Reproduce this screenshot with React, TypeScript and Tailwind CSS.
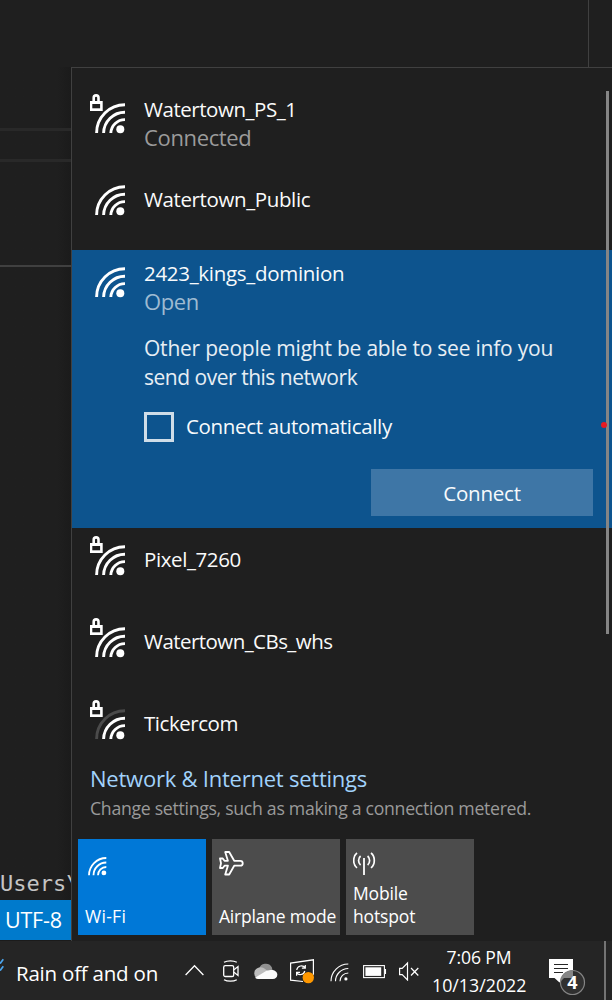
import type { ReactNode } from "react";

function WifiArcs({ weak = false, locked = false }: { weak?: boolean; locked?: boolean }) {
  return (
    <svg width="36" height="40" viewBox="0 0 36 40" fill="none" className="shrink-0">
      <path d="M6.6 39A28.3 28.3 0 0 1 35 10.7" stroke={weak ? "#4b4b4b" : "#fff"} strokeWidth="2.9" />
      <path d="M13.6 39A21.3 21.3 0 0 1 35 18.2" stroke="#fff" strokeWidth="2.9" />
      <path d="M20.8 39A14.1 14.1 0 0 1 35 25.6" stroke="#fff" strokeWidth="2.9" />
      <circle cx="30.3" cy="35.3" r="4" fill="#fff" />
      {locked && (
        <>
          <rect x="0" y="7" width="12.7" height="10" fill="#fff" />
          <path d="M3.7 8V3.8a2.4 2.4 0 0 1 4.8 0V8" stroke="#fff" strokeWidth="2.6" />
          <rect x="2.3" y="10" width="7.8" height="4.3" fill="#1f1f1f" />
        </>
      )}
    </svg>
  );
}

function SmallWifi({ width }: { width: number }) {
  return (
    <svg width="19" height="19" viewBox="0 0 19 19" fill="none" stroke="#fff" strokeWidth={width} className="shrink-0">
      <path d="M1 18.3A17.3 17.3 0 0 1 18.3 1" />
      <path d="M5.5 18.3A12.8 12.8 0 0 1 18.3 5.5" />
      <path d="M10 18.3A8.3 8.3 0 0 1 18.3 10" />
      <circle cx="15.9" cy="15.9" r={width > 1.5 ? 2.4 : 1.6} fill="#fff" stroke="none" />
    </svg>
  );
}

function NetworkRow({ name, locked, weak, status, tracking = "" }: {
  name: string; locked?: boolean; weak?: boolean; status?: string; tracking?: string;
}) {
  return (
    <div className="flex h-[82px] shrink-0 pl-[18px] pt-2">
      <WifiArcs locked={locked} weak={weak} />
      <div className={`ml-[18px] text-[20.5px] leading-[29px] text-[#fafafa] ${status ? "pt-px" : "pt-[9px]"}`}>
        <div className={tracking}>{name}</div>
        {status && <div className="-mt-px text-[22px] tracking-[-0.35px] text-[#9b9b9b]">{status}</div>}
      </div>
    </div>
  );
}

function Tile({ label, icon, active, tracking = "" }: {
  label: ReactNode; icon: ReactNode; active?: boolean; tracking?: string;
}) {
  return (
    <div className={`flex h-24 w-32 flex-col justify-between pb-[7px] pl-[7px] pt-3 text-[17.5px] leading-[23px] text-white ${active ? "bg-[#0078d7]" : "bg-[#4c4c4c]"}`}>
      <div className="h-6">{icon}</div>
      <div className={tracking}>{label}</div>
    </div>
  );
}

function Editor() {
  return (
    <div className="flex w-[71px] shrink-0 flex-col overflow-hidden bg-linear-to-r from-[#1f1f1f] from-80% to-[#1b1b1b]">
      <div className="mt-[61px] h-[3px] bg-[#292929]" />
      <div className="mt-7 h-[3px] bg-[#292929]" />
      <div className="mt-[103px] h-[2px] bg-[#404040]" />
      <div className="mt-auto h-[33px] font-['DejaVu_Sans_Mono',monospace] text-[22px] leading-[33px] text-[#c4c4c4]">Users\</div>
      <div className="h-10 shrink-0 bg-[#007acc] pl-[5px] text-[21.5px] leading-10 tracking-[-0.2px] text-white">UTF-8</div>
      <div className="h-px shrink-0 bg-[#1b1b1b]" />
    </div>
  );
}

function SelectedNetwork() {
  return (
    <div className="flex h-[278px] shrink-0 bg-[#0d548e] pl-[18px] pt-2 text-[20.5px] leading-[29px] text-[#f7fafc]">
      <WifiArcs />
      <div className="ml-[18px] flex flex-1 flex-col pt-px">
        <div className="tracking-[-0.3px]">2423_kings_dominion</div>
        <div className="-mt-px text-[22px] tracking-[-0.4px] text-[#9ebbd2]">Open</div>
        <div className="mt-[18px] text-[21px] tracking-[-0.22px] text-[#e7eef4]">Other people might be able to see info you</div>
        <div className="text-[21px] tracking-[-0.48px] text-[#e7eef4]">send over this network</div>
        <div className="mt-5 flex h-[30px] items-center">
          <div className="size-[30px] border-3 border-[#cfdde8]" />
          <div className="-mt-[2px] ml-3 tracking-[-0.32px]">Connect automatically</div>
        </div>
        <div className="mr-[19px] mt-[27px] h-[47px] w-[222px] self-end bg-[#3e76a6] text-center leading-[49px] tracking-[-0.2px]">Connect</div>
      </div>
    </div>
  );
}

function Flyout() {
  return (
    <div className="relative flex flex-1 flex-col overflow-hidden border-l border-t border-[#404040] bg-[#1f1f1f]">
      <div className="flex h-[682px] shrink-0 flex-col overflow-hidden pt-[18px]">
        <NetworkRow name="Watertown_PS_1" locked status="Connected" tracking="tracking-[-0.45px]" />
        <NetworkRow name="Watertown_Public" tracking="tracking-[-0.38px]" />
        <SelectedNetwork />
        <NetworkRow name="Pixel_7260" locked tracking="tracking-[-0.4px]" />
        <NetworkRow name="Watertown_CBs_whs" locked tracking="tracking-[-0.55px]" />
        <NetworkRow name="Tickercom" locked weak tracking="tracking-[-0.45px]" />
      </div>
      <div className="pl-[18px] pt-[13px]">
        <div className="text-[22px] leading-[30px] tracking-[-0.23px] text-[#a1d2fb]">Network &amp; Internet settings</div>
        <div className="pt-px text-[17.7px] leading-[28px] tracking-[-0.3px] text-[#9a9a9a]">Change settings, such as making a connection metered.</div>
      </div>
      <div className="mt-[17px] flex gap-[6px] pl-[6px]">
        <Tile label="Wi-Fi" active tracking="tracking-[0.3px]" icon={<div className="pl-[3px] pt-[6px]"><SmallWifi width={1.8} /></div>} />
        <Tile
          label={<span className="whitespace-nowrap">Airplane mode</span>}
          tracking="tracking-[-0.2px]"
          icon={
            <svg width="25" height="25" viewBox="0 0 25 25" fill="none" stroke="#fff" strokeWidth="1.8" strokeLinejoin="round">
              <path d="M6.2 1h4l5 8.8h6.1a2.4 2.4 0 0 1 0 4.9h-6.1l-5 8.8h-4l2.7-8.8H5.5L3.8 17H1l1-4.8L1 7.5h2.8l1.7 2.3h3.4z" />
            </svg>
          }
        />
        <Tile
          label={<>Mobile<br />hotspot</>}
          tracking="tracking-[-0.15px]"
          icon={
            <svg width="24" height="25" viewBox="0 0 24 25" fill="none" stroke="#fff" strokeWidth="1.7">
              <path d="M11 7v17" strokeWidth="1.8" />
              <path d="M4 2c-4.4 3.5-4.4 11.3 0 14.8M18 2c4.4 3.5 4.4 11.3 0 14.8M7.6 5c-2.7 2.2-2.7 6.8 0 9M14.6 5c2.7 2.2 2.7 6.8 0 9" />
            </svg>
          }
        />
      </div>
      <div className="absolute right-[3px] top-[23px] h-[543px] w-[3px] bg-[#858585]" />
      <div className="absolute right-[5px] top-[354px] size-[6px] rounded-full bg-[#e81a22]" />
    </div>
  );
}

function Taskbar() {
  return (
    <div className="flex h-[59px] shrink-0 bg-[#252525] text-white">
      <svg width="4" height="14" viewBox="0 0 4 14" fill="none" stroke="#4ca6ef" strokeWidth="1.7" className="mt-4 shrink-0">
        <path d="M-2 5.5 0.5 6 3.3 2.3M-2 12.5 .5 13 3.3 9.3" />
      </svg>
      <div className="ml-3 w-[168px] pt-[17px] text-[20.5px] leading-[30px] tracking-[-0.22px]">Rain off and on</div>
      <svg width="19" height="12" viewBox="0 0 19 12" fill="none" stroke="#fff" strokeWidth="1.3" className="ml-px mt-[23px] shrink-0">
        <path d="m.6 11 8.9-9.2 8.9 9.2" />
      </svg>
      <svg width="18" height="24" viewBox="0 0 18 24" fill="none" stroke="#fff" strokeWidth="1.3" className="ml-[18px] mt-[18px] shrink-0">
        <rect x="1.7" y="6.7" width="10" height="10.8" rx="1.6" />
        <path d="m12 10.7 4-3.1v8.8l-4-3.1M2 3.3c3.5-2 9.3-2 12.8 0M2 20.7c3.5 2 9.3 2 12.8 0" />
      </svg>
      <svg width="26" height="18" viewBox="0 0 26 18" className="ml-3 mt-[21px] shrink-0">
        <path d="M7 7A7 7 0 0 1 19.8 5.2L21 10H8z" fill="#919191" />
        <path d="M6.2 16.8A5.8 5.8 0 0 1 5.7 6C9 4.2 12 6 14.4 8l5 3-3 5.8z" fill="#bcbcbc" />
        <path d="M3 15.8 14.5 8.7l4-.7c4.5-.2 6.8 2 6.8 4.7 0 2.3-1.8 4.3-4.5 4.3H6.2C5 17 4 16.6 3 15.8z" fill="#fafafa" />
      </svg>
      <svg width="26" height="26" viewBox="0 0 26 26" fill="none" stroke="#fff" strokeWidth="1.2" className="ml-[11px] mt-[17px] shrink-0">
        <path d="M14 23.5 1.6 22.2V5.1L24.4 1.8v15" />
        <path d="M7.7 12c.8-4.5 6.3-5.4 8.4-2.1m.2-3v3.3h-3.4M15.8 13c-1 4-6.2 4.8-8.2 1.6m0 3.1v-3.4H11" />
        <circle cx="19.3" cy="19.6" r="5.7" fill="#ff9800" stroke="none" />
      </svg>
      <div className="ml-[15px] mt-[21.5px]"><SmallWifi width={1.1} /></div>
      <svg width="24" height="14" viewBox="0 0 24 14" fill="none" stroke="#fff" strokeWidth="1.1" className="ml-[14px] mt-6 shrink-0">
        <rect x=".6" y=".6" width="20.8" height="12" />
        <rect x="2.4" y="2.3" width="15.8" height="8.6" fill="#fff" stroke="none" />
        <path d="M22.5 4v5" />
      </svg>
      <svg width="22" height="20" viewBox="0 0 22 20" fill="none" stroke="#fff" strokeWidth="1.2" className="ml-[11px] mt-5 shrink-0">
        <path d="M1.6 7.3h2.6L9.5 2v17L4.2 13.7H1.6zM13 7l7.3 7.5M20.3 7 13 14.5" />
      </svg>
      <div className="ml-[12px] w-[94px] shrink-0 pt-[2px] text-center text-[17.8px] leading-7">
        <div className="text-[17.6px] tracking-[-0.1px]">7:06 PM</div>
        <div>10/13/2022</div>
      </div>
      <svg width="38" height="42" viewBox="0 0 38 42" fill="none" className="ml-[22px] mt-[17px] shrink-0">
        <defs>
          <clipPath id="bubble"><path d="M1 1h24v19H16l-4.5 4.5L6.5 20H1z" /></clipPath>
        </defs>
        <path d="M1 1h24v19H16l-4.5 4.5L6.5 20H1z" fill="#fff" />
        <path d="M6 6.5h14M6 10.5h14M6 14.5h9" stroke="#252525" strokeWidth="1.2" />
        <circle cx="24.5" cy="24.5" r="12" fill="#303030" />
        <circle cx="24.5" cy="24.5" r="12" fill="#858585" clipPath="url(#bubble)" />
        <circle cx="24.5" cy="24.5" r="12" stroke="#858585" strokeWidth="1.2" />
        <text x="24.5" y="31" textAnchor="middle" fill="#fff" fontSize="18" fontWeight="700" fontFamily="Open Sans, sans-serif">4</text>
      </svg>
      <div className="ml-auto mr-[6px] h-full w-[2px] shrink-0 bg-[#747474]" />
    </div>
  );
}

export default function App() {
  return (
    <div className="flex h-[1000px] w-[612px] flex-col overflow-hidden whitespace-nowrap bg-[#1f1f1f] font-['Open_Sans','Noto_Sans',sans-serif]">
      <div className="flex h-[67px] shrink-0 justify-end">
        <div className="w-6 border-l border-[#404040]" />
      </div>
      <div className="flex h-[874px] shrink-0">
        <Editor />
        <Flyout />
      </div>
      <Taskbar />
    </div>
  );
}
